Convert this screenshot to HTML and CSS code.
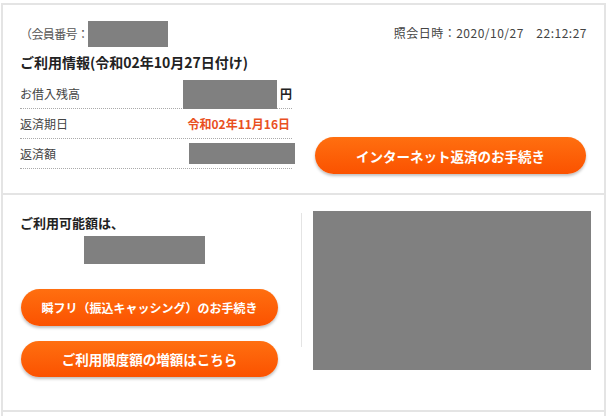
FILE: index.html
```html
<!DOCTYPE html>
<html>
<head>
    <meta charset="UTF-8">
    <title>ご利用情報</title>
    <link rel="stylesheet" href="styles.css">
</head>
<body>
    <div class="frame">
        <div class="panel panel-info">
            <div class="info-head">
                <div class="member">（会員番号：<span class="mask mask-member"></span></div>
                <div class="query-time">照会日時：2020/10/27　22:12:27</div>
            </div>
            <div class="info-body">
                <div class="info-left">
                    <div class="info-title">ご利用情報(令和02年10月27日付け)</div>
                    <div class="row">
                        <span class="row-label">お借入残高</span>
                        <span class="row-value"><span class="mask mask-balance"></span><span class="yen">円</span></span>
                    </div>
                    <div class="row">
                        <span class="row-label">返済期日</span>
                        <span class="row-value due">令和02年11月16日</span>
                    </div>
                    <div class="row">
                        <span class="row-label">返済額</span>
                        <span class="row-value"><span class="mask mask-amount"></span></span>
                    </div>
                </div>
                <div class="info-right">
                    <button class="btn btn-repay">インターネット返済のお手続き</button>
                </div>
            </div>
        </div>

        <div class="panel panel-limit">
            <div class="limit-left">
                <div class="limit-title">ご利用可能額は、</div>
                <div class="mask mask-limit"></div>
                <button class="btn btn-small">瞬フリ（振込キャッシング）のお手続き</button>
                <button class="btn btn-increase">ご利用限度額の増額はこちら</button>
            </div>
            <div class="divider"></div>
            <div class="mask mask-banner"></div>
        </div>

        <div class="panel panel-next"></div>
    </div>
</body>
</html>
```

FILE: styles.css
```css
body {
    margin: 0;
    padding: 0;
    background-color: #fff;
    font-family: "Noto Sans CJK JP", "Liberation Sans", sans-serif;
    color: #333;
}
.frame {
    margin: 3px 2px 0 1px;
}
.panel {
    border: 2px solid #e4e4e4;
    border-bottom: none;
}
.mask {
    background-color: #808080;
}

/* ご利用情報 */
.panel-info {
    height: 188px;
    padding: 0 18px 0 17px;
}
.info-head {
    display: flex;
    justify-content: space-between;
    align-items: center;
    padding-top: 16px;
    height: 26px;
    font-size: 12px;
    line-height: 16px;
}
.member {
    display: flex;
    align-items: center;
    color: #555;
    letter-spacing: -0.6px;
}
.mask-member {
    display: inline-block;
    width: 80px;
    height: 26px;
}
.query-time {
    color: #444;
    padding-bottom: 2px;
    letter-spacing: 0.5px;
    margin-right: -1px;
}
.info-body {
    display: flex;
}
.info-left {
    width: 272px;
}
.info-title {
    font-size: 14px;
    font-weight: bold;
    line-height: 20px;
    margin: 5px 0 7px;
    color: #222;
}
.row {
    display: flex;
    justify-content: space-between;
    align-items: center;
    height: 29px;
    border-bottom: 1px dotted #aaa;
    font-size: 12px;
}
.row-label {
    color: #444;
}
.row-value {
    display: flex;
    align-items: center;
}
.mask-balance {
    display: inline-block;
    width: 94px;
    height: 29px;
    margin-top: 1px;
}
.yen {
    font-weight: bold;
    color: #222;
    margin-left: 3px;
    width: 12px;
}
.due {
    color: #e9501f;
    font-weight: bold;
    padding-right: 2px;
}
.mask-amount {
    display: inline-block;
    width: 106px;
    height: 21px;
    margin-right: -3px;
}
.info-right {
    display: flex;
    align-items: flex-end;
    margin-left: 23px;
}
.info-right .btn {
    margin-bottom: -5px;
}

/* ボタン */
.btn {
    display: block;
    border: none;
    border-radius: 20px;
    background: linear-gradient(#ff6f10, #fb5200);
    box-shadow: 0 2px 3px rgba(0, 0, 0, 0.25);
    color: #fff;
    font-family: "Noto Sans CJK JP", "Liberation Sans", sans-serif;
    font-weight: bold;
    cursor: pointer;
    padding: 0;
}
.btn-repay {
    width: 271px;
    height: 37px;
    font-size: 13.5px;
}

/* ご利用可能額 */
.panel-limit {
    display: flex;
    align-items: flex-start;
    height: 215px;
    padding: 0 0 0 18px;
}
.limit-left {
    width: 257px;
}
.limit-title {
    font-size: 13px;
    font-weight: bold;
    line-height: 18px;
    margin-top: 19px;
    margin-left: -1px;
    color: #222;
}
.mask-limit {
    width: 121px;
    height: 28px;
    margin: 4px 0 0 63px;
}
.btn-small {
    width: 257px;
    height: 37px;
    font-size: 12px;
    margin-top: 25px;
}
.btn-increase {
    width: 257px;
    height: 36px;
    font-size: 13.5px;
    margin-top: 15px;
}
.divider {
    width: 1px;
    height: 134px;
    margin: 18px 0 0 23px;
    background-color: #e4e4e4;
}
.mask-banner {
    width: 278px;
    height: 159px;
    margin: 16px 0 0 11px;
}

.panel-next {
    height: 10px;
}
```
